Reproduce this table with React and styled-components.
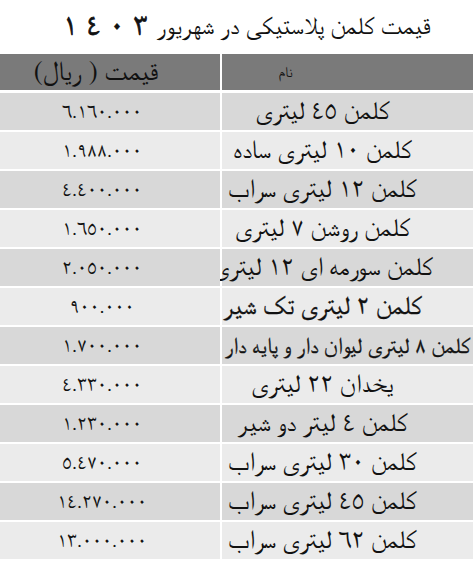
import React from "react";
import styled, { createGlobalStyle } from "styled-components";

const GlobalStyle = createGlobalStyle`
  html, body {
    margin: 0;
    padding: 0;
    background: #ffffff;
  }
  body {
    font-family: "FreeSerif", "Liberation Serif", serif;
  }
`;

const Page = styled.div`
  width: 473px;
  direction: rtl;
  background: #fff;
  color: #111;
`;

const Title = styled.h1`
  margin: 0;
  height: 54px;
  display: flex;
  align-items: center;
  justify-content: center;
  gap: 9px;
  font-size: 25px;
  font-weight: normal;
  padding-left: 20px;
`;

const Year = styled.span`
  display: flex;
  direction: ltr;
  gap: 9px;
  font-size: 29px;
  -webkit-text-stroke: 0.8px #111;
`;

const Table = styled.div`
  display: flex;
  flex-direction: column;
  gap: 2px;
`;

const Row = styled.div`
  display: grid;
  grid-template-columns: 251px 220px;
  column-gap: 2px;
  height: ${(p) => (p.$head ? "36px" : "37px")};
  margin-bottom: ${(p) => (p.$head ? "1px" : "0")};
`;

const Cell = styled.div`
  display: flex;
  align-items: center;
  justify-content: center;
  background: ${(p) => (p.$head ? "#7a7a7a" : p.$alt ? "#ebebeb" : "#d8d8d8")};
  white-space: nowrap;
`;

const NameCell = styled(Cell)`
  font-size: ${(p) => (p.$tight ? "22px" : "26px")};
  -webkit-text-stroke: ${(p) => (p.$bold ? "0.3px #111" : "0")};
  padding-right: ${(p) => (p.$tight ? "0" : "50px")};
`;

const PriceCell = styled(Cell)`
  padding-right: 16px;
`;

const HeadName = styled(Cell)`
  font-size: 15px;
  padding-right: 124px;
  color: #111;
`;

const HeadPrice = styled(Cell)`
  font-size: 27px;
  padding-right: 28px;
`;

const Price = styled.span`
  direction: ltr;
  letter-spacing: 5px;
  font-size: 20px;
`;

const rows = [
  ["کلمن ٤٥ لیتری", "٦.١٦٠.٠٠٠"],
  ["کلمن ١٠ لیتری ساده", "١.٩٨٨.٠٠٠"],
  ["کلمن ١٢ لیتری سراب", "٤.٤٠٠.٠٠٠"],
  ["کلمن روشن ٧ لیتری", "١.٦٥٠.٠٠٠"],
  ["کلمن سورمه ای  ١٢ لیتری", "٢.٠٥٠.٠٠٠"],
  ["کلمن ٢ لیتری تک شیر", "٩٠٠.٠٠٠", "bold"],
  ["کلمن ٨ لیتری لیوان دار و پایه دار", "١.٧٠٠.٠٠٠", "tight"],
  ["یخدان ٢٢ لیتری", "٤.٣٣٠.٠٠٠"],
  ["کلمن ٤ لیتر دو شیر", "١.٢٣٠.٠٠٠"],
  ["کلمن ٣٠ لیتری سراب", "٥.٤٧٠.٠٠٠"],
  ["کلمن ٤٥ لیتری سراب", "١٤.٢٧٠.٠٠٠"],
  ["کلمن ٦٢ لیتری سراب", "١٣.٠٠٠.٠٠٠"],
];

export default function App() {
  return (
    <>
      <GlobalStyle />
      <Page>
        <Title>
          <span>قیمت کلمن پلاستیکی در شهریور</span>
          <Year>
            {["١", "٤", "٠", "٣"].map((d, i) => (
              <span key={i}>{d}</span>
            ))}
          </Year>
        </Title>
        <Table>
          <Row $head>
            <HeadName $head>نام</HeadName>
            <HeadPrice $head>قیمت ( ریال)</HeadPrice>
          </Row>
          {rows.map(([name, price, kind], i) => (
            <Row key={i}>
              <NameCell
                $alt={i % 2 === 1}
                $bold={kind === "bold" || kind === "tight"}
                $tight={kind === "tight"}
              >
                {name}
              </NameCell>
              <PriceCell $alt={i % 2 === 1}>
                <Price>{price}</Price>
              </PriceCell>
            </Row>
          ))}
        </Table>
      </Page>
    </>
  );
}
